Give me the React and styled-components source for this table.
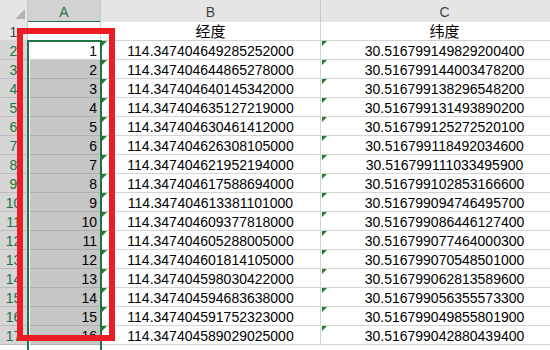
import React from "react";
import styled, { createGlobalStyle } from "styled-components";

const GlobalStyle = createGlobalStyle`
  html, body {
    margin: 0;
    padding: 0;
    background: #fff;
    overflow: hidden;
  }
  body {
    font-family: "Liberation Sans", Arial, "Noto Sans CJK SC", sans-serif;
  }
`;

const Sheet = styled.div`
  position: relative;
  width: 550px;
  height: 350px;
  overflow: hidden;
  background: #fff;
`;

const Row = styled.div`
  display: grid;
  grid-template-columns: 28px 73px 220px 248px;
  height: ${(p) => p.$h || 19}px;
`;

const HeadCell = styled.div`
  box-sizing: border-box;
  height: 100%;
  background: ${(p) => (p.$on ? "#d2d2d2" : "#e6e6e6")};
  color: ${(p) => (p.$on ? "#217346" : "#444")};
  border-right: 1px solid #c8c8c8;
  border-bottom: ${(p) => (p.$on ? "2px solid #217346" : "1px solid #c8c8c8")};
  font-size: 14px;
  line-height: 18px;
  padding-top: 3px;
  text-align: center;
`;

const Corner = styled.div`
  box-sizing: border-box;
  height: 100%;
  background: #e6e6e6;
  border-right: 1px solid #c8c8c8;
  border-bottom: 1px solid #c8c8c8;
  display: flex;
  align-items: flex-end;
  justify-content: flex-end;
  padding: 0 2px 3px 0;
`;

const RowHead = styled.div`
  box-sizing: border-box;
  background: ${(p) => (p.$on ? "#d6d6d6" : "#e6e6e6")};
  color: ${(p) => (p.$on ? "#217346" : "#444")};
  border-right: 1px solid #c8c8c8;
  border-bottom: 1px solid ${(p) => (p.$on ? "#bcbcbc" : "#d4d4d4")};
  font-size: 14px;
  line-height: 17px;
  padding-top: 2px;
  text-align: center;
  white-space: nowrap;
  overflow: hidden;
`;

const Cell = styled.div`
  position: relative;
  box-sizing: border-box;
  background: ${(p) => (p.$sel ? "#c6c6c6" : "#fff")};
  border-right: 1px solid #d4d4d4;
  border-bottom: 1px solid ${(p) => (p.$sel ? "#b0b0b0" : "#d4d4d4")};
  font-size: 14px;
  font-family: "Liberation Sans", Arial, sans-serif;
  line-height: 17px;
  padding: 2px 3px 0 3px;
  color: #000;
  text-align: ${(p) => p.$align || "center"};
  white-space: nowrap;
  overflow: hidden;

  ${(p) =>
    p.$flag &&
    `
    &::before {
      content: "";
      position: absolute;
      left: 1px;
      top: 0;
      width: 0;
      height: 0;
      border-top: 5px solid #1d7d32;
      border-right: 5px solid transparent;
    }
  `}
`;

const TitleCell = styled(Cell)`
  font-family: "Noto Sans CJK SC", "Liberation Sans", sans-serif;
  font-size: 15px;
  line-height: 18px;
  padding-top: 0;
  overflow: visible;
`;

const Selection = styled.div`
  position: absolute;
  left: 27px;
  top: 40px;
  width: 75px;
  height: 340px;
  box-sizing: border-box;
  border: 2px solid #217346;
  box-shadow: inset 1px 0 0 #fff;
  pointer-events: none;
`;

const Mark = styled.div`
  position: absolute;
  left: 17px;
  top: 28px;
  width: 98px;
  height: 313px;
  box-sizing: border-box;
  border: 6px solid #ec1c24;
  pointer-events: none;
`;

const data = [
  ["114.347404649285252000", "30.516799149829200400"],
  ["114.347404644865278000", "30.516799144003478200"],
  ["114.347404640145342000", "30.516799138296548200"],
  ["114.347404635127219000", "30.516799131493890200"],
  ["114.347404630461412000", "30.516799125272520100"],
  ["114.347404626308105000", "30.516799118492034600"],
  ["114.347404621952194000", "30.516799111033495900"],
  ["114.347404617588694000", "30.516799102853166600"],
  ["114.347404613381101000", "30.516799094746495700"],
  ["114.347404609377818000", "30.516799086446127400"],
  ["114.347404605288005000", "30.516799077464000300"],
  ["114.347404601814105000", "30.516799070548501000"],
  ["114.347404598030422000", "30.516799062813589600"],
  ["114.347404594683638000", "30.516799056355573300"],
  ["114.347404591752323000", "30.516799049855801900"],
  ["114.347404589029025000", "30.516799042880439400"],
];

const App = () => (
  <>
    <GlobalStyle />
    <Sheet>
      <Row $h={22}>
        <Corner>
          <svg width="10" height="10" viewBox="0 0 10 10">
            <polygon points="10,0 10,10 0,10" fill="#b4b4b4" />
          </svg>
        </Corner>
        <HeadCell $on>A</HeadCell>
        <HeadCell>B</HeadCell>
        <HeadCell>C</HeadCell>
      </Row>

      <Row>
        <RowHead>1</RowHead>
        <Cell />
        <TitleCell>经度</TitleCell>
        <TitleCell>纬度</TitleCell>
      </Row>

      {data.map(([lng, lat], i) => (
        <Row key={i}>
          <RowHead $on>{i + 2}</RowHead>
          <Cell $align="right" $sel={i > 0}>
            {i + 1}
          </Cell>
          <Cell $flag>{lng}</Cell>
          <Cell $flag>{lat}</Cell>
        </Row>
      ))}

      <Selection />
      <Mark />
    </Sheet>
  </>
);

export default App;
